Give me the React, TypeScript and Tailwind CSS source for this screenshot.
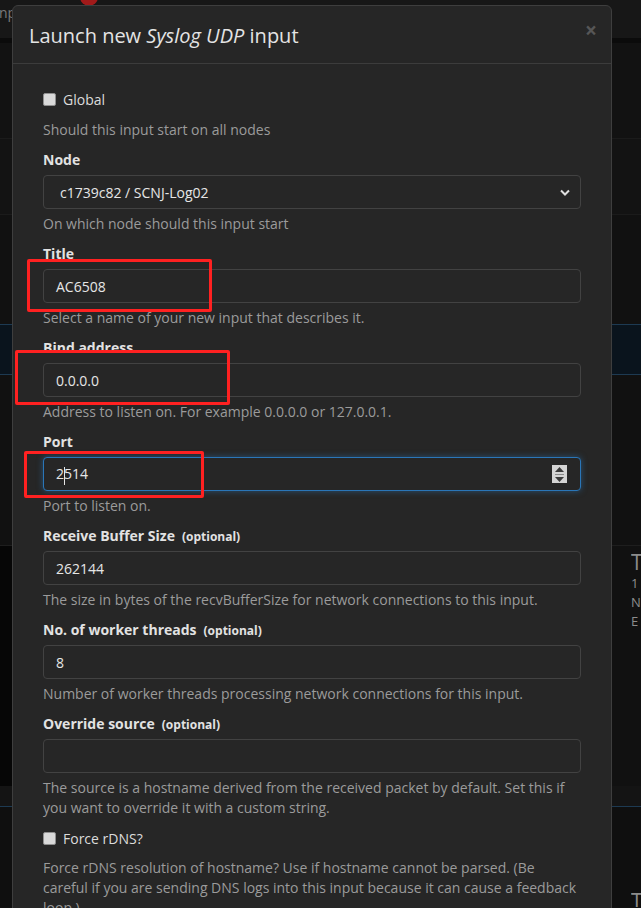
import React from "react";

type FieldProps = {
  label: string;
  optional?: boolean;
  value?: string;
  help: React.ReactNode;
  focused?: boolean;
  select?: boolean;
  number?: boolean;
  caretAt?: number;
};

const Field = ({ label, optional, value = "", help, focused, select, number, caretAt }: FieldProps) => {
  const text =
    caretAt !== undefined ? (
      <>
        {value.slice(0, caretAt)}
        <span className="inline-block w-px h-[18px] bg-[#e6e6e6] align-middle -mx-[0.5px]" />
        {value.slice(caretAt)}
      </>
    ) : (
      value
    );
  return (
    <div className="mb-[10px]">
      <div className="h-5 leading-5 text-[14px] font-bold text-[#e2e2e2]">
        {label}
        {optional && <span className="ml-[7px] text-[12px] font-bold">(optional)</span>}
      </div>
      <div
        className={
          focused
            ? "mt-[5px] h-[34px] rounded-[4px] border border-[#2a76b8] bg-[#262626] shadow-[0_0_6px_rgba(42,118,184,0.55)] flex items-center pl-3 pr-3 text-[14px] text-[#e6e6e6]"
            : select
            ? "mt-[5px] h-[34px] rounded-[4px] border border-[#424242] bg-[#262626] flex items-center pl-4 pr-[6px] text-[14px] text-[#e6e6e6]"
            : "mt-[5px] h-[34px] rounded-[4px] border border-[#424242] bg-[#262626] flex items-center px-3 text-[14px] text-[#e6e6e6]"
        }
      >
        <span className="flex-1">{text}</span>
        {select && (
          <svg width="10" height="7" viewBox="0 0 10 7" className="mr-[4px]">
            <path d="M1 1.5 L5 5.5 L9 1.5" stroke="#e0e0e0" strokeWidth="2" fill="none" />
          </svg>
        )}
        {number && (
          <div className="w-[15px] h-[18px] bg-[#d4d4d4] flex flex-col items-center justify-center gap-[2px] mr-[1px]">
            <svg width="9" height="5" viewBox="0 0 9 5">
              <path d="M4.5 0 L9 5 L0 5 Z" fill="#3a3a3a" />
            </svg>
            <div className="w-[9px] h-px bg-[#8a8a8a]" />
            <svg width="9" height="5" viewBox="0 0 9 5">
              <path d="M0 0 L9 0 L4.5 5 Z" fill="#3a3a3a" />
            </svg>
          </div>
        )}
      </div>
      <div className="mt-[5px] leading-5 text-[14px] text-[#9b9b9b]">{help}</div>
    </div>
  );
};

const Checkbox = ({ label }: { label: string }) => (
  <div className="h-5 flex items-center text-[14px] text-[#dcdcdc]">
    <span className="w-[13px] h-[13px] rounded-[2px] bg-[#d9d9d9] border border-[#8f8f8f] mr-[7px]" />
    {label}
  </div>
);

export default function App() {
  return (
    <div
      className="relative w-[641px] h-[908px] overflow-hidden bg-[#111111]"
      style={{ fontFamily: '"Open Sans", "Noto Sans", sans-serif' }}
    >
      {/* page behind the modal */}
      <div className="flex flex-col">
        <div className="h-[38px] bg-[#171717] pt-[3px] text-[14px] text-[#7a7a7a] leading-5 relative">
          <span className="-ml-[1px]">np</span>
          <span className="absolute left-[80px] -top-[12px] w-[18px] h-[18px] rounded-full bg-[#a11a1a]" />
        </div>
        <div className="h-[5px] bg-[#0b0b0b]" />
        <div className="h-[96px] bg-[#121212] border-b border-[#1b1b1b]" />
        <div className="h-[76px] bg-[#131313] border-b border-[#1b1b1b]" />
        <div className="h-[109px] bg-[#111111]" />
        <div className="h-[51px] bg-[#0a141d] border-y border-[#1d3a52]" />
        <div className="h-[171px] bg-[#111111] border-b border-[#1e1e1e]" />
        <div className="h-[240px] bg-[#111111] flex">
          <div className="w-[12px] bg-[#060606]" />
          <div className="flex-1" />
          <div className="w-[10px] pt-[4px] overflow-hidden text-[#8c8c8c] whitespace-nowrap">
            <div className="text-[21px] leading-[24px]">T</div>
            <div className="text-[13px] leading-[19px]">1</div>
            <div className="text-[13px] leading-[19px]">N</div>
            <div className="text-[13px] leading-[19px]">E</div>
          </div>
        </div>
        <div className="h-[21px] bg-[#141414] border-b border-[#1d3a52]" />
        <div className="h-[100px] bg-[#0f0f0f] flex justify-end">
          <div className="w-[10px] pt-[82px] overflow-hidden text-[21px] leading-[24px] text-[#8c8c8c]">T</div>
        </div>
      </div>

      {/* modal */}
      <div className="absolute left-[12px] top-[5px] w-[600px] h-[960px] rounded-t-[6px] border border-[#3e3e3e] bg-[#262626]">
        <div className="h-[58px] border-b border-[#3c3c3c] flex items-center justify-between pl-4 pr-[14px]">
          <div className="text-[20px] text-[#e4e4e4] leading-[28px] pt-[2px]">
            Launch new <i>Syslog UDP</i> input
          </div>
          <span className="text-[21px] font-bold leading-none text-[#565656] -mt-[8px]">×</span>
        </div>
        <div className="px-[30px] pt-[25px]">
          <Checkbox label="Global" />
          <div className="mt-[11px] mb-[10px] leading-5 text-[14px] text-[#9b9b9b]">
            Should this input start on all nodes
          </div>
          <Field label="Node" select value="c1739c82 / SCNJ-Log02" help="On which node should this input start" />
          <Field label="Title" value="AC6508" help="Select a name of your new input that describes it." />
          <Field
            label="Bind address"
            value="0.0.0.0"
            help="Address to listen on. For example 0.0.0.0 or 127.0.0.1."
          />
          <Field label="Port" value="2514" caretAt={1} focused number help="Port to listen on." />
          <Field
            label="Receive Buffer Size"
            optional
            value="262144"
            help="The size in bytes of the recvBufferSize for network connections to this input."
          />
          <Field
            label="No. of worker threads"
            optional
            value="8"
            help="Number of worker threads processing network connections for this input."
          />
          <Field
            label="Override source"
            optional
            help="The source is a hostname derived from the received packet by default. Set this if you want to override it with a custom string."
          />
          <Checkbox label="Force rDNS?" />
          <div className="mt-[10px] leading-5 text-[14px] text-[#9b9b9b]">
            Force rDNS resolution of hostname? Use if hostname cannot be parsed. (Be careful if you are sending DNS logs
            into this input because it can cause a feedback loop.)
          </div>
        </div>
      </div>

      {/* red annotation boxes */}
      <div className="absolute left-[27px] top-[259px] w-[185px] h-[53px] border-[3px] border-[#ff2121] rounded-[2px]" />
      <div className="absolute left-[15px] top-[350px] w-[215px] h-[55px] border-[3px] border-[#ff2121] rounded-[2px]" />
      <div className="absolute left-[24px] top-[451px] w-[180px] h-[47px] border-[3px] border-[#ff2121] rounded-[2px]" />
    </div>
  );
}
